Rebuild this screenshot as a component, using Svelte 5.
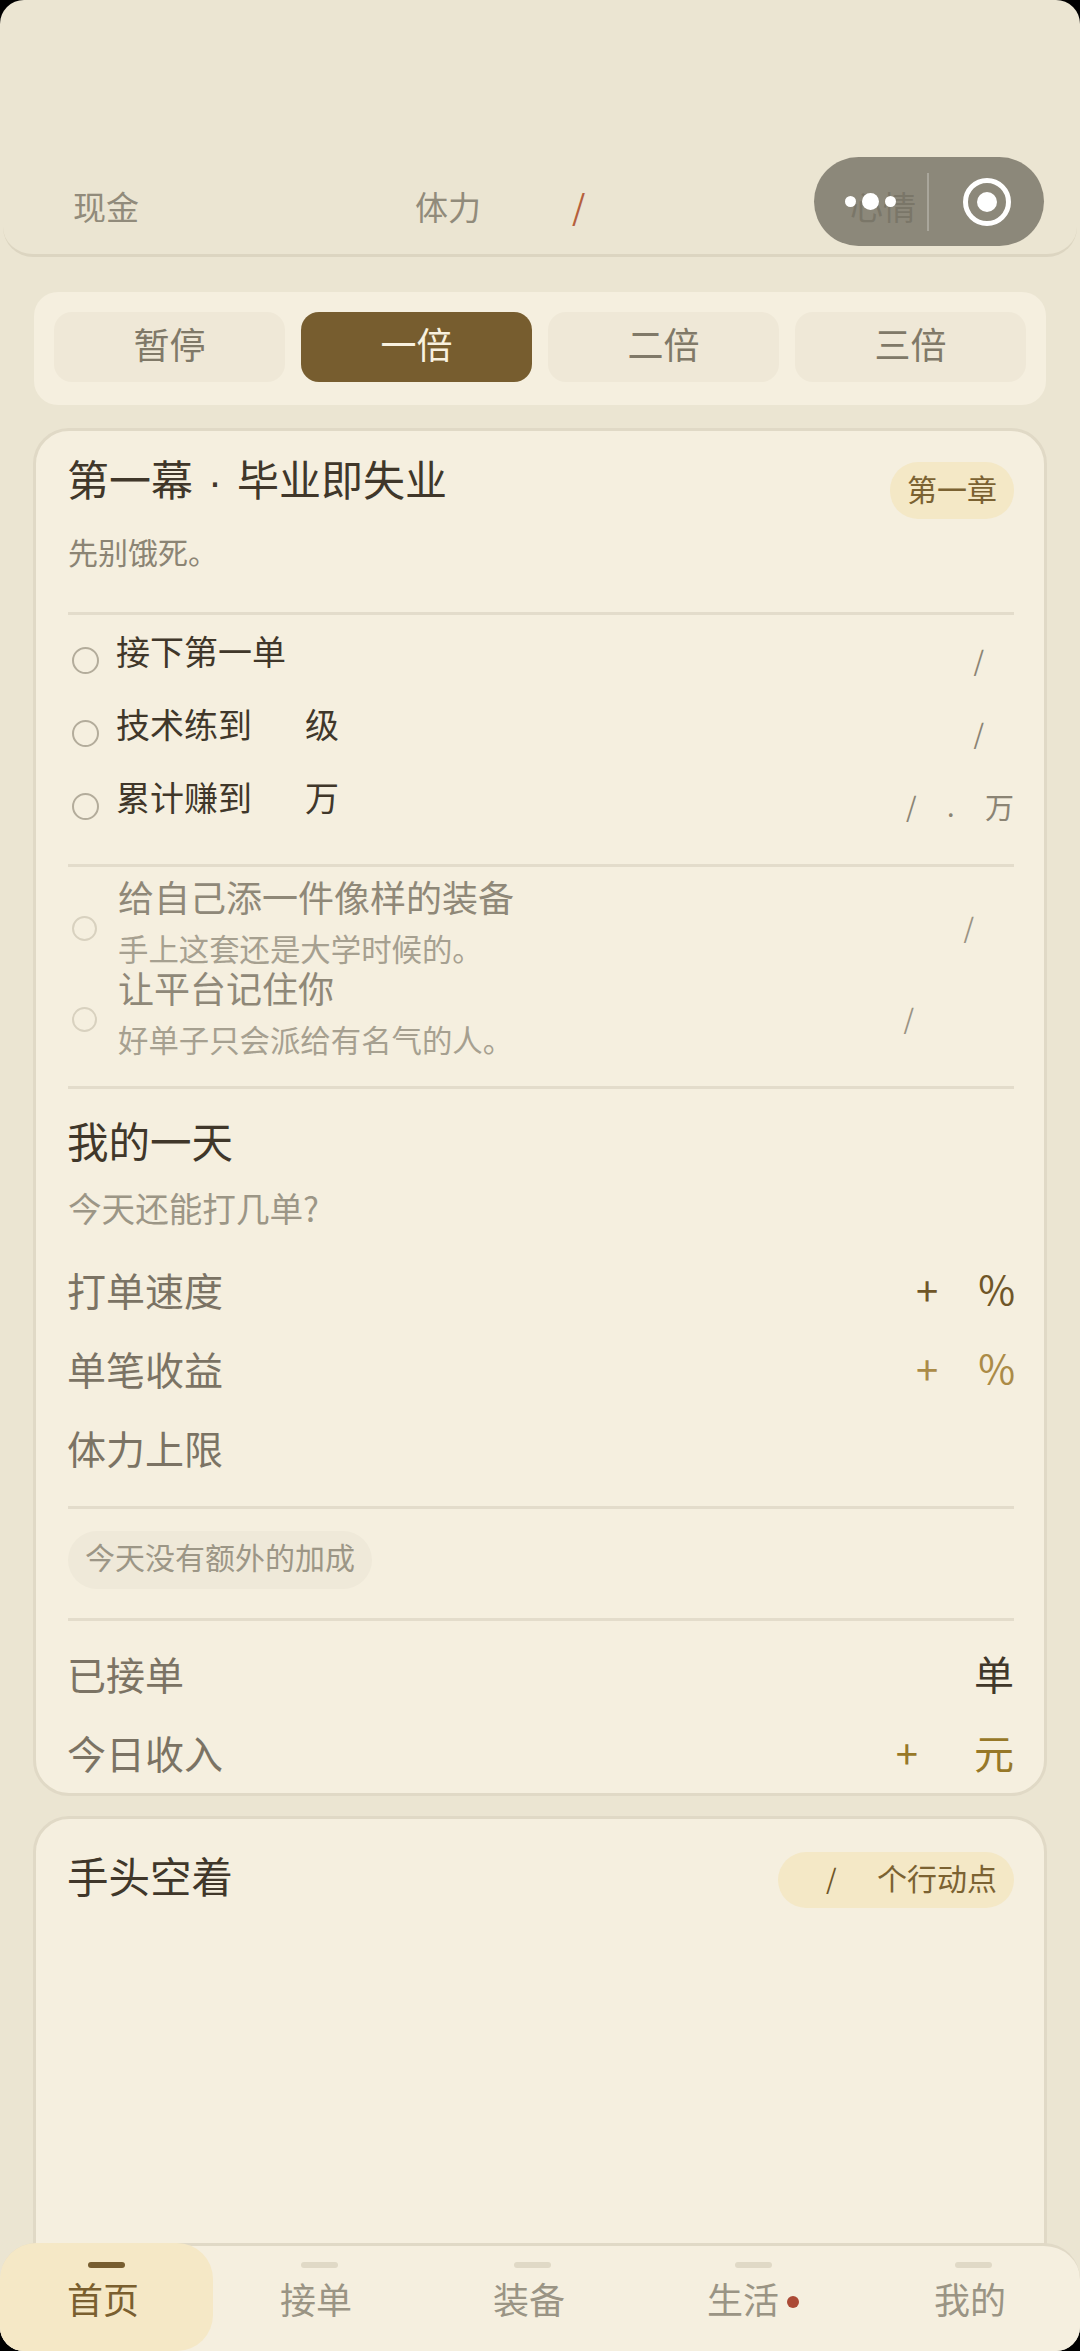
<script>
  const speeds = [
    { label: '暂停', active: false },
    { label: '一倍', active: true },
    { label: '二倍', active: false },
    { label: '三倍', active: false }
  ];
  const tabs = [
    { label: '首页', active: true, dot: false },
    { label: '接单', active: false, dot: false },
    { label: '装备', active: false, dot: false },
    { label: '生活', active: false, dot: true },
    { label: '我的', active: false, dot: false }
  ];
</script>

<div class="screen">
  <header class="topbar">
    <div class="stat stat-cash">现金</div>
    <div class="stat stat-energy">体力<span class="warn">/</span></div>
    <div class="stat">心情</div>
  </header>

  <div class="capsule">
    <div class="dots"><i></i><i class="big"></i><i></i></div>
    <div class="sep"></div>
    <div class="target"><i></i></div>
  </div>

  <div class="speed">
    {#each speeds as s}
      <div class="speed-btn" class:on={s.active}>{s.label}</div>
    {/each}
  </div>

  <section class="card main">
    <div class="head">
      <h2>第一幕<span class="mid">·</span>毕业即失业</h2>
      <span class="chip">第一章</span>
    </div>
    <p class="sub">先别饿死。</p>
    <div class="rule r1"></div>

    <div class="tasks">
      <div class="task">
        <span class="ring"></span>
        <span class="task-text">接下第一单</span>
        <span class="prog p1">/</span>
      </div>
      <div class="task">
        <span class="ring"></span>
        <span class="task-text">技术练到<span class="blank"></span>级</span>
        <span class="prog p1">/</span>
      </div>
      <div class="task">
        <span class="ring"></span>
        <span class="task-text">累计赚到<span class="blank"></span>万</span>
        <span class="prog p3"><span>/</span><span>.</span><span class="wan">万</span></span>
      </div>
    </div>
    <div class="rule r2"></div>

    <div class="goals">
      <div class="goal">
        <span class="ring small"></span>
        <div class="goal-body">
          <div class="goal-title">给自己添一件像样的装备</div>
          <div class="goal-sub">手上这套还是大学时候的。</div>
        </div>
        <span class="goal-prog g1">/</span>
      </div>
      <div class="goal">
        <span class="ring small"></span>
        <div class="goal-body">
          <div class="goal-title">让平台记住你</div>
          <div class="goal-sub">好单子只会派给有名气的人。</div>
        </div>
        <span class="goal-prog g2">/</span>
      </div>
    </div>
    <div class="rule r3"></div>

    <h3 class="day">我的一天</h3>
    <p class="ask">今天还能打几单?</p>
    <div class="stats">
      <div class="line"><span class="name">打单速度</span><span class="val dark"><b>+</b><b>%</b></span></div>
      <div class="line"><span class="name">单笔收益</span><span class="val gold"><b>+</b><b>%</b></span></div>
      <div class="line"><span class="name">体力上限</span></div>
    </div>
    <div class="rule r4"></div>
    <span class="note">今天没有额外的加成</span>
    <div class="rule r5"></div>
    <div class="stats totals">
      <div class="line"><span class="name">已接单</span><span class="unit ink">单</span></div>
      <div class="line"><span class="name">今日收入</span><span class="val income"><b>+</b><b>元</b></span></div>
    </div>
  </section>

  <section class="card idle">
    <div class="idle-head">
      <h2>手头空着</h2>
      <span class="chip ap"><span class="ap-slash">/</span>个行动点</span>
    </div>
  </section>

  <nav class="nav">
    {#each tabs as t}
      <div class="tab" class:on={t.active}>
        <span class="bar"></span>
        <span class="tab-label" class:plain={!t.dot}>{t.label}{#if t.dot}<i class="dot"></i>{/if}</span>
      </div>
    {/each}
  </nav>
</div>

<style>
  :global(body) {
    margin: 0;
    background: #000;
  }
  .screen {
    position: relative;
    width: 1080px;
    height: 2351px;
    overflow: hidden;
    border-radius: 24px;
    background: #ebe5d2;
    font-family: "Noto Sans CJK SC", "Noto Sans", sans-serif;
    color: #3f3629;
  }
  h2, h3, p { margin: 0; font-weight: 400; }

  .topbar {
    height: 254px;
    margin: 0 3px;
    padding: 0 0 0 70px;
    display: flex;
    align-items: flex-end;
    border-bottom: 3px solid #dcd5c1;
    border-radius: 0 0 30px 30px;
  }
  .stat {
    font-size: 33px;
    line-height: 46px;
    color: #918b7b;
    margin-bottom: 25px;
    white-space: nowrap;
  }
  .stat-cash { width: 342px; }
  .stat-energy { width: 435px; display: flex; }
  .warn {
    color: #b5603c;
    margin: 1px 0 0 91px;
    font-size: 34px;
    line-height: 44px;
  }

  .capsule {
    position: absolute;
    left: 814px;
    top: 157px;
    width: 230px;
    height: 89px;
    border-radius: 45px;
    background: rgba(116, 112, 100, 0.8);
    display: flex;
    align-items: center;
  }
  .dots {
    width: 113px;
    display: flex;
    align-items: center;
    justify-content: center;
    gap: 6px;
    box-sizing: border-box;
  }
  .dots i { width: 11px; height: 11px; border-radius: 50%; background: #fff; }
  .dots i.big { width: 17px; height: 17px; }
  .sep { width: 2px; height: 58px; background: rgba(255, 255, 255, 0.25); }
  .target {
    margin-left: 34px;
    width: 48px;
    height: 48px;
    box-sizing: border-box;
    border: 5px solid #fff;
    border-radius: 50%;
    display: flex;
    align-items: center;
    justify-content: center;
  }
  .target i { width: 20px; height: 20px; border-radius: 50%; background: #fff; }

  .speed {
    margin: 35px 34px 0;
    height: 113px;
    box-sizing: border-box;
    padding: 20px 20px 23px;
    background: #f5efdf;
    border-radius: 24px;
    display: grid;
    grid-template-columns: repeat(4, 1fr);
    gap: 16px;
  }
  .speed-btn {
    border-radius: 18px;
    background: #efe8d7;
    color: #807968;
    font-size: 36px;
    line-height: 62px;
    padding-bottom: 8px;
    text-align: center;
  }
  .speed-btn.on {
    background: #775d2f;
    color: #f8f1df;
  }

  .card {
    margin: 23px 33px 0;
    background: #f5efdf;
    border: 3px solid #e0d9c6;
    border-radius: 36px;
    padding: 0 30px 0 32px;
  }
  .main { height: 1362px; }
  .head {
    display: flex;
    justify-content: space-between;
    align-items: flex-start;
    padding-top: 24px;
  }
  .head h2 {
    font-size: 42px;
    line-height: 46px;
    color: #40372a;
    margin-left: -1px;
  }
  .mid {
    font-family: "Liberation Sans", sans-serif;
    margin: 0 15px;
  }
  .idle h2 {
    font-size: 41.5px;
    line-height: 50px;
    color: #40372a;
    margin: -2px 0 0 -1px;
  }
  .chip {
    background: #f4e8c6;
    color: #7b6232;
    border-radius: 28px;
    font-size: 30px;
    line-height: 52px;
    padding: 0 17px 5px;
    margin-top: 7px;
  }
  .sub {
    margin-top: 12px;
    font-size: 30px;
    line-height: 40px;
    color: #8b8474;
  }
  .rule { height: 3px; background: #e3dccb; }
  .r1 { margin-top: 41px; }
  .tasks { padding-top: 3px; }
  .task {
    height: 73px;
    display: flex;
    align-items: center;
  }
  .ring {
    flex: none;
    width: 27px;
    height: 27px;
    box-sizing: border-box;
    border: 2px solid #b3ac9b;
    border-radius: 50%;
    margin: 12px 0 0 4px;
  }
  .task-text {
    margin: 0 0 7px 17px;
    font-size: 34px;
    line-height: 46px;
    color: #40372a;
    display: flex;
  }
  .blank { width: 53px; }
  .prog {
    margin-left: auto;
    margin-top: 10px;
    font-size: 27px;
    line-height: 40px;
    color: #8b8474;
  }
  .p1 { margin-right: 30px; }
  .p3 { display: flex; width: 108px; justify-content: space-between; }
  .wan { font-size: 29px; }
  .r2 { margin-top: 27px; }

  .goals { padding-top: 8.5px; }
  .goal {
    height: 91px;
    display: flex;
    align-items: center;
  }
  .ring.small {
    width: 25px;
    height: 25px;
    border-color: #d8d1bf;
    margin: 14px 0 0 4px;
  }
  .goal-body { margin-left: 21px; }
  .goal-title {
    font-size: 36px;
    line-height: 42px;
    color: #8f8878;
    white-space: nowrap;
  }
  .goal-sub {
    margin-top: 11px;
    font-size: 30.4px;
    line-height: 40px;
    color: #a6a090;
    white-space: nowrap;
  }
  .goal-prog {
    margin-left: auto;
    margin-top: 10px;
    font-size: 27px;
    color: #9a9384;
  }
  .g1 { margin-right: 40px; }
  .g2 { margin-right: 100px; }
  .r3 { margin-top: 28px; }

  .day {
    margin-top: 26px;
    font-size: 41.5px;
    line-height: 50px;
    color: #40372a;
    margin-left: -1px;
  }
  .ask {
    margin-top: 20.5px;
    font-size: 33.6px;
    line-height: 46px;
    color: #9c9686;
  }
  .stats { margin-top: 18px; }
  .line {
    height: 79px;
    display: flex;
    justify-content: space-between;
    align-items: center;
    font-size: 39px;
    color: #7b7364;
  }
  .name { margin-left: -1px; }
  .val { display: flex; align-items: center; }
  .val b { font-weight: 400; }
  .val b:first-child { font-size: 40px; margin-right: 40px; }
  .val b:last-child { font-size: 40px; }
  .dark b:last-child, .gold b:last-child {
    font-size: 40px;
    margin: -2px -1px 0 0;
  }
  .dark { color: #6f5628; }
  .gold { color: #ab8b47; }
  .income { color: #977828; }
  .income b:first-child { margin-right: 56px; }
  .unit { font-size: 40px; }
  .ink { color: #40372a; }
  .r4 { margin-top: 20px; }
  .note {
    display: inline-block;
    margin-top: 22px;
    padding: 0 17px 8px;
    border-radius: 30px;
    background: #efe9d9;
    color: #9c9686;
    font-size: 30px;
    line-height: 50px;
    vertical-align: top;
  }
  .r5 { margin-top: 29px; }
  .totals { margin-top: 12.5px; }

  .card.idle { height: 600px; margin-top: 20px; }
  .idle-head {
    display: flex;
    justify-content: space-between;
    align-items: flex-start;
    padding-top: 33px;
  }
  .chip.ap {
    margin-top: 0;
    line-height: 51px;
    width: 236px;
    box-sizing: border-box;
    padding: 0 17px 5px 48px;
    display: flex;
    justify-content: space-between;
  }
  .ap-slash { color: #6f5628; font-size: 27px; }

  .nav {
    position: absolute;
    left: 0;
    right: 0;
    bottom: 0;
    height: 108px;
    box-sizing: border-box;
    background: #f5efdf;
    border-top: 3px solid #e0d9c6;
    border-radius: 36px 36px 0 0;
    display: flex;
  }
  .tab {
    flex: 0 0 213px;
    margin-top: -3px;
    display: flex;
    flex-direction: column;
    align-items: center;
    color: #9a9484;
    border-radius: 36px 36px 36px 0;
  }
  .tab:nth-child(4) { flex-basis: 228px; }
  .tab.on {
    background: #f5e8c6;
    color: #7a5f2f;
  }
  .bar {
    width: 37px;
    height: 6px;
    border-radius: 3px;
    margin-top: 19px;
    background: #e0d9c6;
  }
  .tab.on .bar { background: #775d2f; }
  .tab-label {
    margin-top: 5px;
    font-size: 36px;
    line-height: 50px;
    display: flex;
    align-items: center;
  }
  .tab-label.plain { padding-right: 7px; }
  .dot {
    width: 12px;
    height: 12px;
    border-radius: 50%;
    background: #ab4a36;
    margin: 8px 0 0 8px;
  }
</style>
